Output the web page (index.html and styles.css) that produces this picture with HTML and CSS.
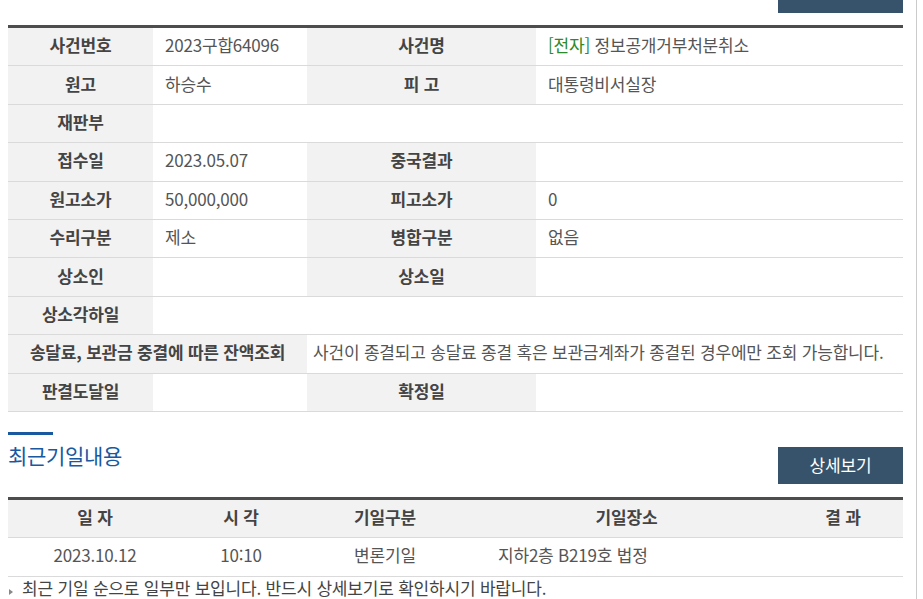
FILE: index.html
```html
<!DOCTYPE html>
<html lang="ko">
<head>
<meta charset="utf-8">
<title>사건일반내용</title>
<link rel="stylesheet" href="styles.css">
</head>
<body>
<div class="page">
  <div class="top-actions"><span class="btn-stub"></span></div>

  <table class="info-table">
    <colgroup>
      <col class="c1"><col class="c2"><col class="c3"><col class="c4">
    </colgroup>
    <tbody>
      <tr>
        <th>사건번호</th><td>2023구합64096</td>
        <th>사건명</th><td><span class="tag">[전자]</span> 정보공개거부처분취소</td>
      </tr>
      <tr>
        <th>원고</th><td>하승수</td>
        <th>피 고</th><td>대통령비서실장</td>
      </tr>
      <tr>
        <th>재판부</th><td colspan="3"></td>
      </tr>
      <tr>
        <th>접수일</th><td>2023.05.07</td>
        <th>중국결과</th><td></td>
      </tr>
      <tr>
        <th>원고소가</th><td>50,000,000</td>
        <th>피고소가</th><td>0</td>
      </tr>
      <tr>
        <th>수리구분</th><td>제소</td>
        <th>병합구분</th><td>없음</td>
      </tr>
      <tr>
        <th>상소인</th><td></td>
        <th>상소일</th><td></td>
      </tr>
      <tr>
        <th>상소각하일</th><td colspan="3"></td>
      </tr>
      <tr>
        <th colspan="2">송달료, 보관금 중결에 따른 잔액조회</th>
        <td colspan="2" class="narrow">사건이 종결되고 송달료 종결 혹은 보관금계좌가 종결된 경우에만 조회 가능합니다.</td>
      </tr>
      <tr>
        <th>판결도달일</th><td></td>
        <th>확정일</th><td></td>
      </tr>
    </tbody>
  </table>

  <div class="section-head">
    <h2 class="section-title">최근기일내용</h2>
    <button class="btn-detail" type="button">상세보기</button>
  </div>

  <table class="date-table">
    <colgroup>
      <col class="d1"><col class="d2"><col class="d3"><col class="d4"><col class="d5">
    </colgroup>
    <thead>
      <tr><th>일 자</th><th>시 각</th><th>기일구분</th><th>기일장소</th><th>결 과</th></tr>
    </thead>
    <tbody>
      <tr><td>2023.10.12</td><td>10:10</td><td>변론기일</td><td class="place">지하2층 B219호 법정</td><td></td></tr>
    </tbody>
  </table>

  <p class="note">최근 기일 순으로 일부만 보입니다. 반드시 상세보기로 확인하시기 바랍니다.</p>
</div>
</body>
</html>
```

FILE: styles.css
```css
html, body {
  margin: 0;
  padding: 0;
  background: #fff;
}

body {
  font-family: "Noto Sans CJK KR", "Noto Sans", sans-serif;
  font-size: 17px;
  color: #555;
  letter-spacing: -0.2px;
}

.page {
  box-sizing: border-box;
  width: 917px;
  height: 599px;
  padding: 0 13px 0 8px;
  border-right: 1px solid #cbcbcb;
  overflow: hidden;
}

.top-actions {
  display: flex;
  justify-content: flex-end;
  height: 25px;
}

.btn-stub {
  display: block;
  width: 125px;
  height: 13px;
  background: #37536b;
}

.info-table,
.date-table {
  width: 895px;
  table-layout: fixed;
  border-collapse: collapse;
  border-top: 3px solid #4d4d4d;
}

.info-table .c1 { width: 145px; }
.info-table .c2 { width: 154px; }
.info-table .c3 { width: 229px; }
.info-table .c4 { width: 367px; }

.info-table th,
.info-table td {
  height: 34.4px;
  padding: 0 12px 3px;
  border-bottom: 1px solid #dadada;
  vertical-align: middle;
  line-height: 20px;
  white-space: nowrap;
}

.info-table th {
  background: #f2f2f2;
  color: #444;
  font-weight: 700;
  text-align: center;
}

.info-table td {
  background: #fff;
  text-align: left;
}

.info-table td.narrow {
  padding-left: 6px;
}

.tag {
  color: #2b8a2b;
}

.section-head {
  display: flex;
  justify-content: space-between;
  align-items: flex-start;
  margin-top: 20px;
}

.section-title {
  margin: 0;
  font-size: 21px;
  font-weight: 400;
  line-height: 24px;
  color: #18599f;
  letter-spacing: -0.3px;
}

.section-title::before {
  content: "";
  display: block;
  width: 45px;
  height: 3px;
  background: #18599f;
  margin-bottom: 8px;
}

.btn-detail {
  margin-top: 15px;
  width: 125px;
  height: 37px;
  border: 0;
  background: #37536b;
  color: #fff;
  font-family: inherit;
  font-size: 17px;
  letter-spacing: -0.2px;
  padding: 0 0 2px;
  cursor: pointer;
}

.date-table {
  margin-top: 13px;
}

.date-table .d1 { width: 174px; }
.date-table .d2 { width: 118px; }
.date-table .d3 { width: 170px; }
.date-table .d4 { width: 313px; }
.date-table .d5 { width: 120px; }

.date-table th,
.date-table td {
  height: 34.4px;
  padding: 0 0 3px;
  border-bottom: 1px solid #dadada;
  text-align: center;
  vertical-align: middle;
  line-height: 20px;
  white-space: nowrap;
}

.date-table th {
  background: #f2f2f2;
  color: #444;
  font-weight: 700;
}

.date-table td.place {
  text-align: left;
  padding-left: 28px;
}

.note {
  position: relative;
  margin: 1px 0 0;
  padding-left: 14px;
  line-height: 20px;
  color: #444;
}

.note::before {
  content: "";
  position: absolute;
  left: 1px;
  top: 11px;
  border-left: 4px solid #888;
  border-top: 3px solid transparent;
  border-bottom: 3px solid transparent;
}
```
